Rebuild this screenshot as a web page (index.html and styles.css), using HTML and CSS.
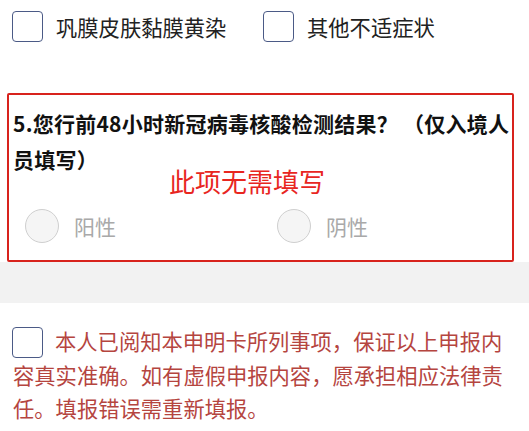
FILE: index.html
```html
<!DOCTYPE html>
<html lang="zh">
<head>
<meta charset="utf-8">
<link rel="stylesheet" href="styles.css">
</head>
<body>
<div class="symptoms">
  <label class="check-item"><span class="box"></span><span class="label">巩膜皮肤黏膜黄染</span></label>
  <label class="check-item"><span class="box"></span><span class="label">其他不适症状</span></label>
</div>

<div class="question">
  <div class="q-title">5.您行前48小时新冠病毒核酸检测结果？ （仅入境人员填写）</div>
  <div class="note">此项无需填写</div>
  <div class="options">
    <div class="option"><span class="radio"></span><span class="opt-label">阳性</span></div>
    <div class="option"><span class="radio"></span><span class="opt-label">阴性</span></div>
  </div>
</div>

<div class="divider"></div>

<div class="agree">
  <p class="agree-text"><span class="box inline"></span>本人已阅知本申明卡所列事项，保证以上申报内容真实准确。如有虚假申报内容，愿承担相应法律责任。填报错误需重新填报。</p>
</div>
</body>
</html>
```

FILE: styles.css
```css
* { box-sizing: border-box; }
html, body {
  margin: 0;
  padding: 0;
  background: #ffffff;
  font-family: "Noto Sans CJK SC", "Noto Sans", sans-serif;
  color: #1a1a1a;
}
.symptoms {
  display: grid;
  grid-template-columns: 251px 251px;
  padding: 11px 0 0 12px;
  height: 93px;
}
.check-item {
  display: flex;
  align-items: center;
  height: 31px;
}
.box {
  display: inline-block;
  width: 31px;
  height: 31px;
  border: 1.5px solid #4b5a86;
  border-radius: 4px;
  background: #fff;
  flex: none;
}
.label {
  margin-left: 13px;
  font-size: 21.3px;
  line-height: 31px;
  color: #222;
}
.question {
  position: relative;
  margin: 0 15px 0 7px;
  border: 2px solid #d8231d;
  border-radius: 2px;
  padding: 10px 0 17px 4px;
}
.q-title {
  font-size: 21px;
  letter-spacing: 0.25px;
  font-weight: 700;
  line-height: 36px;
  color: #111;
}
.note {
  position: absolute;
  left: 160px;
  top: 72px;
  font-size: 26px;
  line-height: 28px;
  color: #e8261f;
}
.options {
  display: grid;
  grid-template-columns: 252px 1fr;
  padding-left: 12px;
  margin-top: 32px;
}
.option {
  display: flex;
  align-items: center;
  height: 34px;
}
.radio {
  width: 34px;
  height: 34px;
  border-radius: 50%;
  border: 1.5px solid #cfcfcf;
  background: #f5f5f5;
  flex: none;
}
.opt-label {
  margin-left: 15px;
  font-size: 21px;
  color: #a9a9a9;
}
.divider {
  height: 41px;
  background: #f2f2f2;
}
.agree {
  padding: 21px 12px 0 13px;
}
.agree-text {
  margin: 0;
  font-size: 21.3px;
  line-height: 33px;
  color: #b5453f;
}
.box.inline {
  vertical-align: middle;
  margin: -3px 12px 0 -1px;
}
```
